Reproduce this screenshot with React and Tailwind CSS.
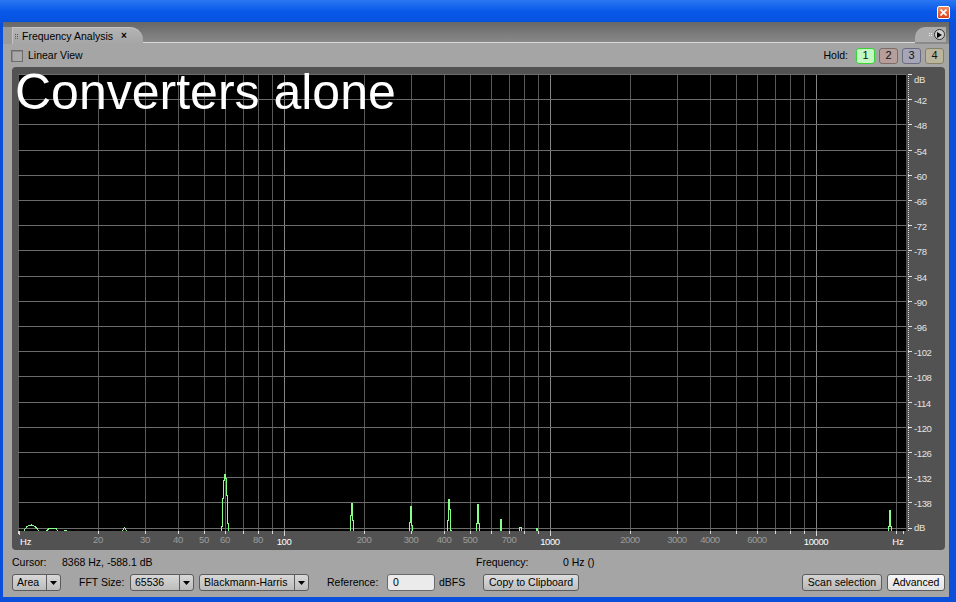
const fx = (f) => Math.round(266 * Math.log10(f / 10));

const gridFreqs = [];
for (const d of [10, 100, 1000, 10000]) {
  for (let m = 1; m <= 9; m++) {
    if (m * d <= 20000) gridFreqs.push(m * d);
  }
}
const majors = [100, 1000, 10000];
const minorLabels = [20, 30, 40, 50, 60, 80, 200, 300, 400, 500, 700, 2000, 3000, 4000, 6000];
const rows = Array.from({ length: 19 }, (_, i) => Math.round(i * 25.2));
const dbLabels = ["dB", ...Array.from({ length: 17 }, (_, i) => String(-42 - 6 * i)), "dB"];

// spectrum trace, screen coordinates
const trace = [
  [18, 533], [23, 533], [24, 530], [26, 527], [28, 525.5], [31, 525], [33, 525.5], [35, 527], [37, 529], [38, 531], [40, 533],
  [45, 533], [46, 531], [48, 529], [50, 528], [54, 528], [56, 529], [57, 531], [58, 533],
  [63, 533], [64, 530], [66, 530], [67, 533],
  [121, 533], [123, 529], [124, 527.5], [125, 529], [127, 533],
  [221, 533], [221, 526], [222, 526], [222, 498], [223, 498], [223, 480], [224, 480], [224, 474], [225, 474], [225, 478],
  [226, 478], [226, 495], [227, 495], [227, 523], [228, 523], [228, 533],
  [350, 533], [350, 515], [351, 515], [351, 503], [352, 503], [352, 520], [353, 520], [353, 533],
  [409, 533], [409, 522], [410, 522], [410, 506], [411, 506], [411, 525], [412, 525], [412, 533],
  [447, 533], [447, 520], [448, 520], [448, 499], [449, 499], [449, 509], [450, 509], [450, 530], [451, 530], [451, 533],
  [476, 533], [476, 523], [477, 523], [477, 504], [478, 504], [478, 523], [479, 523], [479, 533],
  [500, 533], [500, 519], [501, 519], [501, 533],
  [519, 533], [519, 528], [520, 527], [521, 527], [521, 533],
  [536, 533], [536, 528], [537, 528], [537, 533],
  [888, 533], [888, 526], [889, 526], [889, 510], [890, 510], [890, 526], [891, 526], [891, 533], [906, 533],
];

function Chart() {
  const pts = trace.map(([x, y]) => `${x - 18 + 0.5},${y - 74}`).join(" ");
  return (
    <svg width="927" height="476" className="block" style={{ fontFamily: '"Liberation Sans", Arial, sans-serif' }}>
      <defs>
        <clipPath id="plot">
          <rect x="0" y="0" width="888" height="457" />
        </clipPath>
      </defs>
      <rect x="0" y="0" width="888" height="457" fill="#000" />
      {gridFreqs.map((f) => (
        <line
          key={f}
          x1={fx(f) + 0.5}
          x2={fx(f) + 0.5}
          y1="0"
          y2="457"
          stroke={majors.includes(f) ? "#858585" : "#585858"}
          shapeRendering="crispEdges"
        />
      ))}
      {rows.map((y) => (
        <line key={y} x1="0" x2="888" y1={y + 0.5} y2={y + 0.5} stroke="#6c6c6c" shapeRendering="crispEdges" />
      ))}
      <polyline
        points={pts}
        fill="none"
        stroke="#86ff86"
        strokeWidth="1"
        clipPath="url(#plot)"
        shapeRendering="crispEdges"
      />

      {/* bottom axis */}
      {gridFreqs.map((f) => (
        <line
          key={"t" + f}
          x1={fx(f) + 0.5}
          x2={fx(f) + 0.5}
          y1="457"
          y2={majors.includes(f) ? 462 : 460}
          stroke="#d8d8d8"
          shapeRendering="crispEdges"
        />
      ))}
      <line x1="1.5" x2="1.5" y1="457" y2="461" stroke="#d8d8d8" shapeRendering="crispEdges" />
      <line x1="885.5" x2="885.5" y1="457" y2="460" stroke="#d8d8d8" shapeRendering="crispEdges" />
      {minorLabels.map((f) => (
        <text key={"l" + f} x={fx(f)} y="469" textAnchor="middle" fontSize="9.5" letterSpacing="-0.4" fill="#9c9c9c">
          {f}
        </text>
      ))}
      {majors.map((f) => (
        <text key={"m" + f} x={fx(f)} y="471" textAnchor="middle" fontSize="9.5" letterSpacing="-0.4" fill="#fff">
          {f}
        </text>
      ))}
      <text x="2" y="471" fontSize="9.5" fill="#fff">Hz</text>
      <text x="880" y="471" textAnchor="middle" fontSize="9.5" fill="#fff">Hz</text>

      {/* right axis */}
      <line x1="890.5" x2="890.5" y1="0" y2="457" stroke="#e0e0e0" strokeDasharray="1 1" shapeRendering="crispEdges" />
      {rows.map((y) => (
        <line key={"r" + y} x1="890" x2="894" y1={y + 0.5} y2={y + 0.5} stroke="#e0e0e0" shapeRendering="crispEdges" />
      ))}
      {dbLabels.map((t, i) => {
        const y = i === 0 ? 8.5 : i === 18 ? 456.5 : rows[i] + 4.5;
        return (
          <text key={"d" + i} x="896" y={y} fontSize="9.5" letterSpacing="-0.4" fill="#e4e4e4">
            {t}
          </text>
        );
      })}
    </svg>
  );
}

function Tri() {
  return (
    <svg width="7" height="4">
      <polygon points="0,0 7,0 3.5,4" fill="#000" />
    </svg>
  );
}

function Combo({ className, label }) {
  return (
    <div className={`flex h-[17px] rounded-[3px] border border-[#5c5c5c] bg-gradient-to-b from-[#d8d8d8] to-[#bcbcbc] ${className}`}>
      <div className="flex flex-1 items-center pl-[4px]">{label}</div>
      <div className="flex w-[14px] items-center justify-center border-l border-[#5c5c5c]">
        <Tri />
      </div>
    </div>
  );
}

function Btn({ className, children }) {
  return (
    <div className={`flex h-[17px] items-center justify-center rounded-[3px] border border-[#5c5c5c] ${className}`}>
      {children}
    </div>
  );
}

function HoldBtn({ n, className }) {
  return (
    <div className={`flex h-[16px] w-[19px] items-center justify-center rounded-[3px] border text-[11px] text-[#111] ${className}`}>
      {n}
    </div>
  );
}

export default function App() {
  return (
    <div className="flex h-[602px] w-[956px] flex-col overflow-hidden bg-[#0a4fdc] font-['Liberation_Sans',Arial,sans-serif] text-[10.5px] leading-none text-black">
      {/* title bar */}
      <div className="flex h-[22px] justify-end bg-gradient-to-b from-[#2a78f2] via-[#0a58e8] to-[#0652e0] pr-[6px] pt-[6px]">
        <div className="flex h-[13px] w-[13px] items-center justify-center rounded-[2px] border border-white bg-gradient-to-b from-[#f08a60] to-[#d7401a]">
          <svg width="7" height="7">
            <path d="M0.5 0.5 L6.5 6.5 M6.5 0.5 L0.5 6.5" stroke="#fff" strokeWidth="1.6" />
          </svg>
        </div>
      </div>

      {/* body */}
      <div className="mb-[5px] ml-[3px] mr-[7px] flex flex-1 flex-col bg-[#a5a5a5]">
        {/* tab strip */}
        <div className="flex h-[22px] items-end bg-gradient-to-b from-[#666] via-[#7a7a7a] to-[#8c8c8c]">
          <div className="h-[17px] w-[9px] bg-[#9a9a9a]" />
          <div className="flex h-[17px] w-[131px] items-center rounded-tr-[13px] border-l border-t border-[#c4c4c4] bg-gradient-to-b from-[#b4b4b4] to-[#a5a5a5] pl-[2px]">
            <div className="grid grid-cols-2 gap-[1px] pr-[4px]">
              {Array.from({ length: 6 }).map((_, i) => (
                <div key={i} className="h-[1px] w-[1px] bg-[#5a5a5a]" />
              ))}
            </div>
            <span className="text-[10.5px]">Frequency Analysis</span>
            <span className="ml-[8px] text-[10px] font-bold">×</span>
          </div>
          <div className="flex h-[17px] flex-1 flex-col justify-end">
            <div className="h-px bg-[#dadada]" />
            <div className="h-px bg-[#a5a5a5]" />
          </div>
          <div className="mb-[2px] mr-[3px] flex h-[15px] w-[31px] items-center justify-end gap-[2px] rounded-tl-[10px] bg-[#acacac] pr-[1px]">
            <div className="grid grid-cols-2 gap-[1px]">
              {Array.from({ length: 4 }).map((_, i) => (
                <div key={i} className="h-[1px] w-[1px] bg-[#f0f0f0]" />
              ))}
            </div>
            <div className="flex h-[11px] w-[11px] items-center justify-center rounded-full border border-[#333] bg-[#d0d0d0]">
              <svg width="5" height="6">
                <polygon points="0,0 5,3 0,6" fill="#000" />
              </svg>
            </div>
          </div>
        </div>

        {/* toolbar */}
        <div className="flex h-[23px] items-center pl-[8px] pr-[5px]">
          <div className="h-[12px] w-[12px] border border-[#6c6c6c] bg-[#a9a9a9] shadow-[inset_1px_1px_0_#8a8a8a]" />
          <span className="ml-[5px]">Linear View</span>
          <div className="flex-1" />
          <span className="mr-[8px]">Hold:</span>
          <div className="flex gap-[4px]">
            <HoldBtn n="1" className="border-[#3ad43a] bg-[#c4f8c0]" />
            <HoldBtn n="2" className="border-[#7c6c6a] bg-[#b69e9a]" />
            <HoldBtn n="3" className="border-[#6c6c80] bg-[#a6a6b8]" />
            <HoldBtn n="4" className="border-[#86826a] bg-[#bab59c]" />
          </div>
        </div>

        {/* chart frame */}
        <div className="ml-[9px] mr-[4px] h-[483px] rounded-[4px] bg-[#525252] pl-[6px] pt-[7px]">
          <div className="relative">
            <Chart />
            <div className="absolute left-[-3px] top-[-7px] text-[50px] leading-[50px] text-white">Converters alone</div>
          </div>
        </div>

        {/* info row */}
        <div className="mt-[3px] flex h-[18px] items-center pl-[9px]">
          <span className="w-[50px]">Cursor:</span>
          <span className="w-[414px]">8368 Hz, -588.1 dB</span>
          <span className="w-[87px]">Frequency:</span>
          <span>0 Hz ()</span>
        </div>

        {/* controls row */}
        <div className="mt-[3px] flex h-[17px] items-center pl-[9px] pr-[4px]">
          <Combo className="w-[49px]" label="Area" />
          <span className="ml-[18px] w-[51px]">FFT Size:</span>
          <Combo className="w-[64px]" label="65536" />
          <Combo className="ml-[5px] w-[110px]" label="Blackmann-Harris" />
          <span className="ml-[18px] w-[60px]">Reference:</span>
          <div className="flex h-[17px] w-[48px] items-center rounded-[3px] border border-[#6a6a6a] bg-[#ebebeb] pl-[5px]">0</div>
          <span className="ml-[4px] w-[44px]">dBFS</span>
          <Btn className="w-[96px] bg-gradient-to-b from-[#dedede] to-[#bdbdbd]">Copy to Clipboard</Btn>
          <div className="flex-1" />
          <Btn className="w-[80px] bg-gradient-to-b from-[#d4d4d4] to-[#b8b8b8]">Scan selection</Btn>
          <Btn className="ml-[5px] w-[58px] bg-gradient-to-b from-[#f6f6f6] to-[#e2e2e2]">Advanced</Btn>
        </div>
      </div>
    </div>
  );
}
